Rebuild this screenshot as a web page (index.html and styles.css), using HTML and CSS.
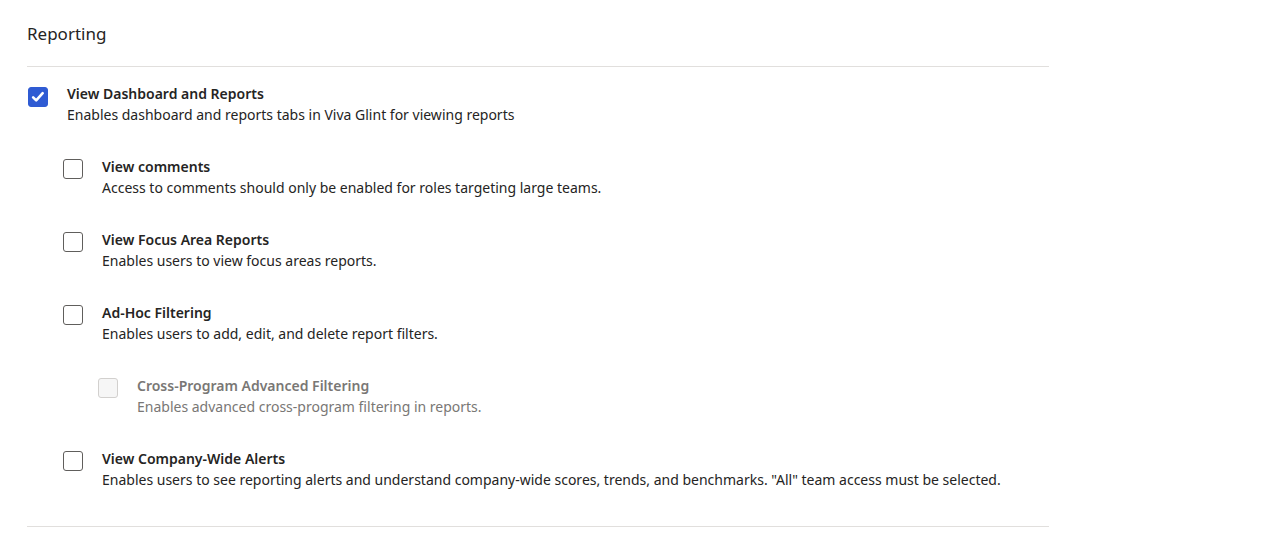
FILE: index.html
```html
<!DOCTYPE html>
<html lang="en">
<head>
    <meta charset="UTF-8">
    <meta name="viewport" content="width=device-width, initial-scale=1.0">
    <title>Reporting Permissions</title>
    <link rel="stylesheet" href="styles.css">
</head>
<body>
    <section class="section">
        <h2 class="section-title">Reporting</h2>
        <div class="perm-list">
            <div class="perm">
                <span class="box checked">
                    <svg viewBox="0 0 20 20" width="20" height="20"><path d="M4.6 10.4l3.4 3.4L15.2 5.8" fill="none" stroke="#fff" stroke-width="2.9" stroke-linecap="round" stroke-linejoin="round"/></svg>
                </span>
                <div class="perm-text">
                    <div class="perm-name">View Dashboard and Reports</div>
                    <div class="perm-desc">Enables dashboard and reports tabs in Viva Glint for viewing reports</div>
                </div>
            </div>

            <div class="perm-group">
                <div class="perm">
                    <span class="box"></span>
                    <div class="perm-text">
                        <div class="perm-name">View comments</div>
                        <div class="perm-desc">Access to comments should only be enabled for roles targeting large teams.</div>
                    </div>
                </div>
                <div class="perm">
                    <span class="box"></span>
                    <div class="perm-text">
                        <div class="perm-name">View Focus Area Reports</div>
                        <div class="perm-desc">Enables users to view focus areas reports.</div>
                    </div>
                </div>
                <div class="perm">
                    <span class="box"></span>
                    <div class="perm-text">
                        <div class="perm-name">Ad-Hoc Filtering</div>
                        <div class="perm-desc">Enables users to add, edit, and delete report filters.</div>
                    </div>
                </div>
                <div class="perm-group">
                    <div class="perm disabled">
                        <span class="box"></span>
                        <div class="perm-text">
                            <div class="perm-name">Cross-Program Advanced Filtering</div>
                            <div class="perm-desc">Enables advanced cross-program filtering in reports.</div>
                        </div>
                    </div>
                </div>
                <div class="perm">
                    <span class="box"></span>
                    <div class="perm-text">
                        <div class="perm-name">View Company-Wide Alerts</div>
                        <div class="perm-desc">Enables users to see reporting alerts and understand company-wide scores, trends, and benchmarks. "All" team access must be selected.</div>
                    </div>
                </div>
            </div>
        </div>
    </section>
</body>
</html>
```

FILE: styles.css
```css
body {
    font-family: "Noto Sans", Arial, sans-serif;
    margin: 0;
    padding: 0;
    background-color: #fff;
    color: #252423;
}
.section {
    width: 1022px;
    margin-left: 27px;
    padding-top: 22px;
    border-bottom: 1px solid #e1dfdd;
    padding-bottom: 36px;
}
.section-title {
    margin: 0;
    font-size: 17px;
    font-weight: 400;
    line-height: 24px;
    padding-bottom: 20px;
    border-bottom: 1px solid #e1dfdd;
}
.perm-list {
    padding-top: 17px;
}
.perm-group {
    padding-left: 35px;
}
.perm {
    display: flex;
    gap: 19px;
}
.perm-list .perm + .perm-group,
.perm-group .perm + .perm,
.perm-group .perm + .perm-group,
.perm-group .perm-group + .perm {
    margin-top: 32px;
}
.box {
    flex: none;
    width: 18px;
    height: 18px;
    margin: 2px 0 0 1px;
    border: 1px solid #605e5c;
    border-radius: 3px;
    display: flex;
    align-items: center;
    justify-content: center;
}
.box.checked {
    background-color: #2f5bd3;
    border-color: #2f5bd3;
    margin-top: 3px;
}
.box.checked svg {
    width: 18px;
    height: 18px;
}
.perm-name {
    font-size: 14px;
    font-weight: 600;
    line-height: 20px;
}
.perm-desc {
    font-size: 14px;
    line-height: 21px;
}
.disabled .box {
    border-color: #d2d0ce;
    background-color: #f6f6f6;
}
.disabled .perm-name,
.disabled .perm-desc {
    color: #797775;
}
```
